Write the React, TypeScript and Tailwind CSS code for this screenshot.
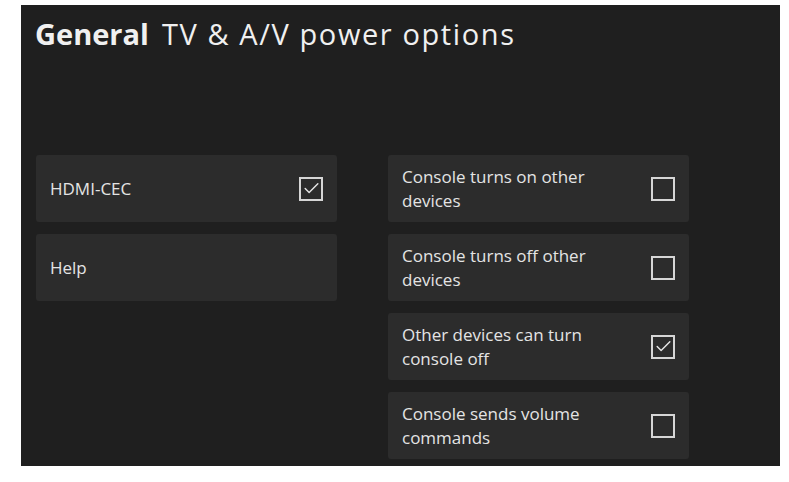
import { Check } from 'lucide-react'

type Option = {
  label: string
  checked?: boolean
  box?: boolean
}

const leftOptions: Option[] = [
  { label: 'HDMI-CEC', checked: true, box: true },
  { label: 'Help' },
]

const rightOptions: Option[] = [
  { label: 'Console turns on other devices', box: true },
  { label: 'Console turns off other devices', box: true },
  { label: 'Other devices can turn console off', checked: true, box: true },
  { label: 'Console sends volume commands', box: true },
]

function OptionCard({ option }: { option: Option }) {
  return (
    <div className="flex h-[67px] items-center justify-between rounded-[3px] bg-[#2c2c2c] pl-[14px] pr-[14px]">
      <span className="w-[200px] text-[17px] leading-[24px] text-[#e4e4e4]">{option.label}</span>
      {option.box && (
        <span className="flex h-[24px] w-[24px] items-center justify-center border-2 border-[#d6d6d6]">
          {option.checked && <Check className="h-[19px] w-[19px] text-[#e6e6e6]" strokeWidth={1.8} />}
        </span>
      )}
    </div>
  )
}

export default function App() {
  return (
    <div className="h-[482px] w-[789px] bg-white pl-[21px] pt-[5px] font-['Open_Sans',sans-serif]">
      <div className="h-[461px] w-[759px] bg-[#1f1f1f]">
        <h1 className="flex pl-[14px] pt-[9px] text-[29px] leading-[40px] text-[#f0f0f0]">
          <span className="font-bold">General</span>
          <span className="ml-[13px] tracking-[1.6px]">TV &amp; A/V power options</span>
        </h1>
        <div className="mt-[101px] flex gap-[51px] pl-[15px]">
          <div className="flex w-[301px] flex-col gap-[12px]">
            {leftOptions.map((o) => (
              <OptionCard key={o.label} option={o} />
            ))}
          </div>
          <div className="flex w-[301px] flex-col gap-[12px]">
            {rightOptions.map((o) => (
              <OptionCard key={o.label} option={o} />
            ))}
          </div>
        </div>
      </div>
    </div>
  )
}
